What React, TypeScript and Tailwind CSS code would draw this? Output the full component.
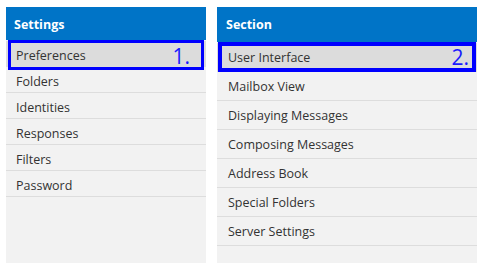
import React from 'react';

interface Panel {
  title: string;
  items: string[];
  mark: string;
}

const settings: Panel = {
  title: 'Settings',
  items: ['Preferences', 'Folders', 'Identities', 'Responses', 'Filters', 'Password'],
  mark: '1.',
};

const sections: Panel = {
  title: 'Section',
  items: [
    'User Interface',
    'Mailbox View',
    'Displaying Messages',
    'Composing Messages',
    'Address Book',
    'Special Folders',
    'Server Settings',
  ],
  mark: '2.',
};

const App: React.FC = () => {
  return (
    <div
      className="flex h-[263px] w-[482px] gap-[11px] overflow-hidden bg-white pl-[6px] pt-[7px] text-[#333333]"
      style={{ fontFamily: '"Open Sans", "Noto Sans", sans-serif' }}
    >
      {/* left: settings list */}
      <div className="flex w-[200px] flex-col bg-[#f2f2f2]">
        <div className="flex h-[33px] items-center bg-[#0074c7] px-[8px] pt-[3px] text-[12.5px] font-bold text-white">
          {settings.title}
        </div>
        <ul className="mt-[1px]">
          {settings.items.map((item, i) => (
            <li
              key={item}
              className={`relative flex h-[26px] items-center border-b border-[#dddddd] pl-[10px] pt-[5px] text-[12.5px] ${
                i === 0 ? 'bg-[#dcdcdc]' : ''
              }`}
            >
              {item}
              {i === 0 && (
                <div className="absolute left-[2px] right-[2px] top-[-1px] flex h-[30px] items-center justify-end border-[3px] border-[#0000ff] pr-[11px] pt-[2px]">
                  <span className="text-[21px] leading-none text-[#1a1aff]">{settings.mark}</span>
                </div>
              )}
            </li>
          ))}
        </ul>
      </div>

      {/* right: section list */}
      <div className="flex w-[260px] flex-col bg-[#f2f2f2]">
        <div className="flex h-[35px] items-center bg-[#0074c7] px-[9px] pt-[2px] text-[12.5px] font-bold text-white">
          {sections.title}
        </div>
        <ul className="mt-[1px]">
          {sections.items.map((item, i) => (
            <li
              key={item}
              className={`relative flex h-[29px] items-center border-b border-[#dddddd] pl-[11px] pt-[3px] text-[12.5px] ${
                i === 0 ? 'bg-[#dcdcdc]' : ''
              }`}
            >
              {item}
              {i === 0 && (
                <div className="absolute left-[1px] right-[1px] top-[-1px] flex h-[30px] items-center justify-end border-[4px] border-[#0000ff] pr-[3px] pt-[1px]">
                  <span className="text-[21px] leading-none text-[#1a1aff]">{sections.mark}</span>
                </div>
              )}
            </li>
          ))}
        </ul>
      </div>
    </div>
  );
};

export default App;
